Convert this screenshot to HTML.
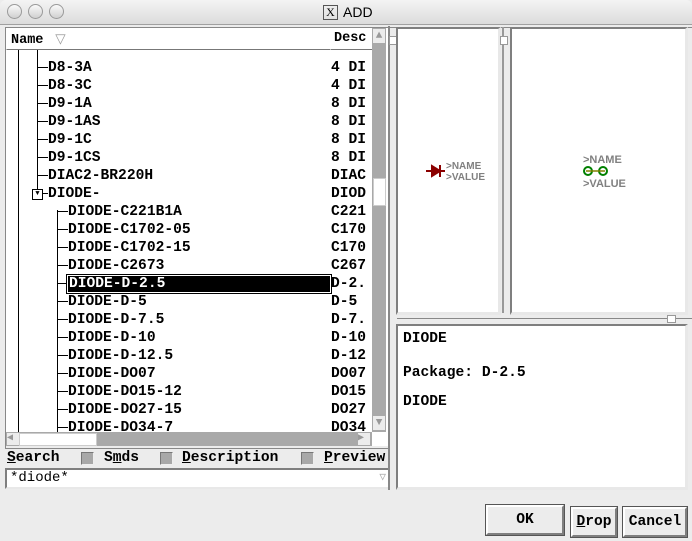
<!DOCTYPE html>
<html><head><style>
body{margin:0;width:692px;height:541px;background:#ececec;position:relative;overflow:hidden;font-family:"Liberation Mono",monospace;font-weight:bold;font-size:14.6px;color:#000}
.a{position:absolute}
.title{left:0;top:0;width:692px;height:24px;background:linear-gradient(#f4f4f4,#dcdcdc);border-bottom:1px solid #a0a0a0;border-radius:6px 6px 0 0}
.tl{top:4px;width:13px;height:13px;border-radius:50%;border:1px solid #9a9a9a;background:linear-gradient(#fafafa,#d0d0d0)}
.row{position:absolute;height:18px;line-height:18px;white-space:nowrap}
.vl{position:absolute;width:1px;background:#000}
.hl{position:absolute;height:1px;background:#000}
.sunk{border:2px solid;border-color:#7f7f7f #e8e8e8 #e8e8e8 #7f7f7f;background:#fff}
.btn{background:#ececec;border:2px solid;border-color:#fff #7f7f7f #7f7f7f #fff;outline:1px solid #555;text-align:center;line-height:26px}
.cb{width:11px;height:11px;background:#a8a8a8;border:1px solid;border-color:#777 #eee #eee #777}
u{text-decoration:underline}
</style></head><body>
<div class="a title"></div>
<div class="a tl" style="left:7px"></div><div class="a tl" style="left:28px"></div><div class="a tl" style="left:49px"></div>
<div class="a" style="left:323px;top:5px;width:13px;height:13px;border:1px solid #555;font:12px 'Liberation Serif';text-align:center;line-height:13px;font-weight:normal">X</div>
<div class="a" style="left:343px;top:4px;font:14px 'Liberation Sans';font-weight:normal">ADD</div>

<!-- tree panel -->
<div class="a" style="left:5px;top:27px;width:382px;height:420px;border:1px solid #888;background:#fff;overflow:hidden">
 <div class="a" style="left:0;top:0;width:322px;height:20px;border:1px solid;border-color:#fff #777 #777 #fff;background:#fff;line-height:20px;padding-left:4px;font-size:13.5px">Name <span style="font-weight:normal;color:#999;font-family:'Liberation Sans'">&nbsp;▽</span></div>
 <div class="a" style="left:324px;top:0;width:44px;height:20px;border:1px solid;border-color:#fff #777 #777 #fff;background:#fff;line-height:20px;padding-left:3px;font-size:13.5px;overflow:hidden">Desc</div>
 <div class="a" style="left:0;top:22px;width:366px;height:382px;overflow:hidden">
  <div class="vl" style="left:12px;top:0;height:382px"></div>
  <div class="vl" style="left:31px;top:0;height:150px"></div>
  <div class="vl" style="left:51px;top:160px;height:222px"></div>
  <div class="row" style="left:42px;top:-13px">D7-1AS</div>
 </div>
 <div class="a" style="left:0;top:22px;width:366px;height:382px;overflow:hidden" id="rows"></div>
 <!-- vscroll -->
 <div class="a" style="left:366px;top:0;width:14px;height:404px;background:#a9a9a9"></div>
 <div class="a" style="left:367px;top:1px;width:12px;height:14px;background:#ececec;color:#999;font-size:11px;text-align:center;line-height:14px">▲</div>
 <div class="a" style="left:367px;top:150px;width:11px;height:26px;background:#fff;border:1px solid #ccc"></div>
 <div class="a" style="left:367px;top:388px;width:12px;height:14px;background:#ececec;color:#999;font-size:11px;text-align:center;line-height:14px">▼</div>
 <!-- hscroll -->
 <div class="a" style="left:0;top:404px;width:366px;height:14px;background:#a9a9a9"></div>
 <div class="a" style="left:1px;top:405px;width:12px;height:12px;background:#ececec;color:#999;font-size:10px;line-height:12px">◀</div>
 <div class="a" style="left:13px;top:405px;width:76px;height:11px;background:#fff;border:1px solid #ccc"></div>
 <div class="a" style="left:352px;top:405px;width:12px;height:12px;background:#ececec;color:#999;font-size:10px;line-height:12px">▶</div>
 <div class="a" style="left:0;top:418px;width:382px;height:4px;background:#ececec"></div>
</div>

<div class="a" style="left:7px;top:449px;line-height:18px;font-size:14.6px;white-space:nowrap"><u>S</u>earch</div>
<div class="a cb" style="left:81px;top:452px"></div>
<div class="a" style="left:104px;top:449px;line-height:18px">S<u>m</u>ds</div>
<div class="a cb" style="left:160px;top:452px"></div>
<div class="a" style="left:182px;top:449px;line-height:18px"><u>D</u>escription</div>
<div class="a cb" style="left:301px;top:452px"></div>
<div class="a" style="left:324px;top:449px;line-height:18px"><u>P</u>review</div>
<div class="a sunk" style="left:5px;top:468px;width:378px;height:17px;line-height:17px;padding-left:3px;font-weight:normal;font-size:14px">*diode*<span style="position:absolute;right:2px;color:#aaa;font-size:11px">▽</span></div>

<!-- right -->
<div class="a" style="left:388px;top:26px;width:2px;height:464px;background:#888"></div>
<div class="a" style="left:390px;top:27px;width:302px;height:1px;background:#888"></div>
<div class="a" style="left:389px;top:36px;width:6px;height:7px;background:#fff;border:1px solid #999"></div>
<div class="a sunk" style="left:396px;top:27px;width:100px;height:283px;border-width:2px 3px 3px 2px"></div>
<div class="a" style="left:502px;top:27px;width:2px;height:286px;background:#999"></div>
<div class="a" style="left:500px;top:36px;width:6px;height:7px;background:#fff;border:1px solid #999"></div>
<div class="a sunk" style="left:510px;top:27px;width:173px;height:283px;border-width:2px 3px 3px 2px"></div>
<div class="a" style="left:397px;top:318px;width:295px;height:1px;background:#888"></div>
<div class="a" style="left:667px;top:315px;width:7px;height:6px;background:#fff;border:1px solid #999"></div>
<svg class="a" style="left:425px;top:158px" width="70" height="28">
 <g stroke="#8b0000" stroke-width="2" fill="#8b0000"><line x1="1" y1="13" x2="20" y2="13"/><polygon points="7,8 7,18 15,13"/><line x1="15" y1="7" x2="15" y2="19"/></g>
 <text x="21" y="11" font-family="Liberation Sans" font-size="10" fill="#808080" font-weight="bold">&gt;NAME</text>
 <text x="21" y="22" font-family="Liberation Sans" font-size="10" fill="#808080" font-weight="bold">&gt;VALUE</text>
</svg>
<svg class="a" style="left:580px;top:150px" width="70" height="40">
 <text x="3" y="13" font-family="Liberation Sans" font-size="11" fill="#808080" font-weight="bold">&gt;NAME</text>
 <text x="3" y="37" font-family="Liberation Sans" font-size="11" fill="#808080" font-weight="bold">&gt;VALUE</text>
 <circle cx="8" cy="21" r="4" fill="none" stroke="#008000" stroke-width="2"/>
 <circle cx="23" cy="21" r="4" fill="none" stroke="#008000" stroke-width="2"/>
 <line x1="6" y1="21" x2="25" y2="21" stroke="#808000" stroke-width="1.5"/>
</svg>
<div class="a sunk" style="left:396px;top:324px;width:287px;height:162px;border-width:2px 3px 3px 2px;padding:0 5px;box-sizing:border-box;width:292px;height:166px;font-size:14.6px;line-height:18px">
 <div style="margin-top:4px">DIODE</div><div style="margin-top:16px">Package: D-2.5</div><div style="margin-top:11px">DIODE</div>
</div>

<div class="a btn" style="left:486px;top:505px;width:74px;height:26px">OK</div>
<div class="a btn" style="left:571px;top:507px;width:42px;height:26px"><u>D</u>rop</div>
<div class="a btn" style="left:623px;top:507px;width:60px;height:26px">Cancel</div>

<script>
var items=[["D8-3A","4 DI",1],["D8-3C","4 DI",1],["D9-1A","8 DI",1],["D9-1AS","8 DI",1],["D9-1C","8 DI",1],["D9-1CS","8 DI",1],["DIAC2-BR220H","DIAC",1],["DIODE-","DIOD",0],
["DIODE-C221B1A","C221",2],["DIODE-C1702-05","C170",2],["DIODE-C1702-15","C170",2],["DIODE-C2673","C267",2],["DIODE-D-2.5","D-2.",3],["DIODE-D-5","D-5",2],["DIODE-D-7.5","D-7.",2],["DIODE-D-10","D-10",2],["DIODE-D-12.5","D-12",2],["DIODE-DO07","DO07",2],["DIODE-DO15-12","DO15",2],["DIODE-DO27-15","DO27",2],["DIODE-DO34-7","DO34",2]];
var h="",c=document.getElementById("rows");
items.forEach(function(it,i){var y=9+i*18,lvl=it[2];
 if(lvl==1){h+='<div class="hl" style="left:31px;top:'+(y+8)+'px;width:11px"></div><div class="row" style="left:42px;top:'+y+'px">'+it[0]+'</div>';}
 else if(lvl==0){h+='<div class="a" style="left:26px;top:'+(y+4)+'px;width:9px;height:9px;border:1px solid #000;background:#fff;font-size:7px;line-height:9px;text-align:center">▼</div><div class="hl" style="left:37px;top:'+(y+8)+'px;width:5px"></div><div class="row" style="left:42px;top:'+y+'px">'+it[0]+'</div>';}
 else if(lvl==2){h+='<div class="hl" style="left:51px;top:'+(y+8)+'px;width:11px"></div><div class="row" style="left:62px;top:'+y+'px">'+it[0]+'</div>';}
 else {h+='<div class="hl" style="left:51px;top:'+(y+8)+'px;width:11px"></div><div class="row" style="left:61px;top:'+y+'px;width:261px;background:#000;color:#fff;outline:1px solid #000;border:1px solid #fff;height:16px;line-height:16px;padding-left:1px">'+it[0]+'</div>';}
 h+='<div class="row" style="left:325px;top:'+y+'px">'+it[1]+'</div>';});
c.innerHTML=h;
</script>
</body></html>
